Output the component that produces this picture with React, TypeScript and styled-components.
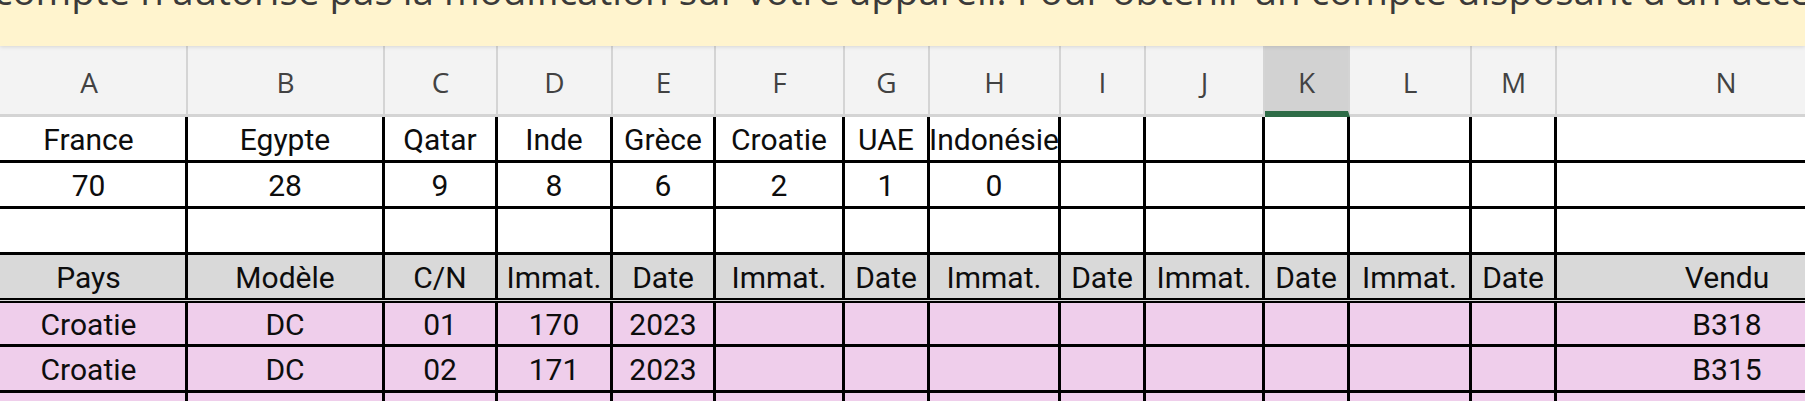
import styled, { createGlobalStyle, css } from "styled-components";

const COLS = [196, 197, 113, 115, 103, 129, 85, 131, 85, 119, 85, 122, 85, 340];
const template = COLS.map((w) => `${w}px`).join(" ");
const LETTERS = ["A", "B", "C", "D", "E", "F", "G", "H", "I", "J", "K", "L", "M", "N"];
const SELECTED = "K";

const GlobalStyle = createGlobalStyle`
  html, body {
    margin: 0;
    padding: 0;
    background: #ffffff;
    overflow: hidden;
  }
`;

const Page = styled.div`
  width: 1805px;
  height: 401px;
  overflow: hidden;
  background: #ffffff;
`;

const Banner = styled.div`
  position: relative;
  z-index: 2;
  height: 46px;
  overflow: hidden;
  background: #fff4ce;
  box-shadow: 0 1px 4px rgba(0, 0, 0, 0.12);
`;

const BannerText = styled.span`
  display: block;
  margin: -29px 0 0 -6px;
  font-family: "Open Sans", "Noto Sans", sans-serif;
  font-size: 38.5px;
  line-height: 38px;
  color: #3b3a39;
  white-space: nowrap;
`;

const Sheet = styled.div`
  margin-left: -8px;
  width: 1900px;
`;

const HeaderBar = styled.div`
  display: grid;
  grid-template-columns: ${template};
  height: 71px;
  background: #f3f3f3;
`;

const ColumnHead = styled.div<{ $selected?: boolean }>`
  display: flex;
  align-items: center;
  justify-content: center;
  box-sizing: border-box;
  padding-top: 4px;
  border-right: 2px solid #d4d4d4;
  border-bottom: 3px solid #d4d4d4;
  font-family: "Open Sans", "Noto Sans", sans-serif;
  font-size: 28px;
  color: #424242;
  ${({ $selected }) =>
    $selected &&
    css`
      background: #d2d2d2;
      border-bottom: 6px solid #2e6c47;
      padding-top: 7px;
    `}
`;

type Tone = "plain" | "head" | "sold";

const tones: Record<Tone, string> = {
  plain: "#ffffff",
  head: "#d9d9d9",
  sold: "#efceeb",
};

const Row = styled.div<{ $tone: Tone; $height: number }>`
  display: grid;
  grid-template-columns: ${template};
  height: ${({ $height }) => $height}px;
  box-sizing: border-box;
  background: ${({ $tone }) => tones[$tone]};
  border-bottom: ${({ $tone }) =>
    $tone === "head" ? "5px double #000000" : "3px solid #000000"};
`;

const Cell = styled.div`
  display: flex;
  align-items: center;
  justify-content: center;
  box-sizing: border-box;
  border-right: 3px solid #000000;
  padding-top: 3px;
  font-family: Roboto, "Liberation Sans", sans-serif;
  font-size: 30px;
  line-height: 1;
  color: #0d0d0d;
  white-space: nowrap;
  overflow: visible;
  min-width: 0;

  &:last-child {
    border-right: none;
  }
`;

const rows: { tone: Tone; height: number; cells: string[] }[] = [
  {
    tone: "plain",
    height: 46,
    cells: ["France", "Egypte", "Qatar", "Inde", "Grèce", "Croatie", "UAE", "Indonésie"],
  },
  { tone: "plain", height: 46, cells: ["70", "28", "9", "8", "6", "2", "1", "0"] },
  { tone: "plain", height: 46, cells: [] },
  {
    tone: "head",
    height: 48,
    cells: [
      "Pays",
      "Modèle",
      "C/N",
      "Immat.",
      "Date",
      "Immat.",
      "Date",
      "Immat.",
      "Date",
      "Immat.",
      "Date",
      "Immat.",
      "Date",
      "Vendu",
    ],
  },
  {
    tone: "sold",
    height: 44,
    cells: ["Croatie", "DC", "01", "170", "2023", "", "", "", "", "", "", "", "", "B318"],
  },
  {
    tone: "sold",
    height: 46,
    cells: ["Croatie", "DC", "02", "171", "2023", "", "", "", "", "", "", "", "", "B315"],
  },
  { tone: "sold", height: 46, cells: [] },
];

export default function App() {
  return (
    <Page>
      <GlobalStyle />
      <Banner>
        <BannerText>
          compte n'autorise pas la modification sur votre appareil. Pour obtenir un compte
          disposant d'un accès complet, veuillez contacter votre administrateur.
        </BannerText>
      </Banner>
      <Sheet>
        <HeaderBar>
          {LETTERS.map((l) => (
            <ColumnHead key={l} $selected={l === SELECTED}>
              {l}
            </ColumnHead>
          ))}
        </HeaderBar>
        {rows.map((r, i) => (
          <Row key={i} $tone={r.tone} $height={r.height}>
            {COLS.map((_, c) => (
              <Cell key={c}>{r.cells[c] ?? ""}</Cell>
            ))}
          </Row>
        ))}
      </Sheet>
    </Page>
  );
}
